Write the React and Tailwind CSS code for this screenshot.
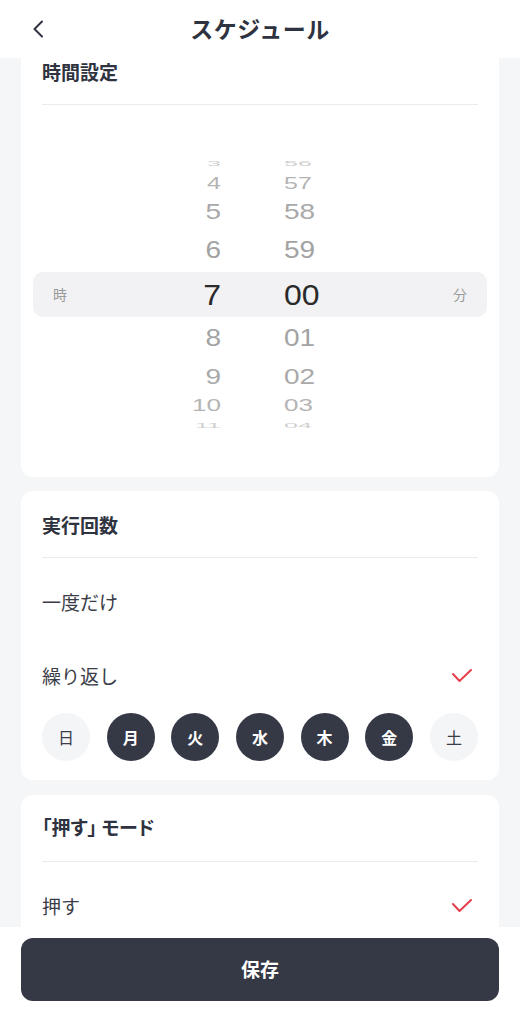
import React from "react";

const JP = { fontFamily: '"Noto Sans CJK JP", "Noto Sans", sans-serif' };
const NUM = { fontFamily: '"Liberation Sans", Arial, sans-serif' };

const rows = [
  { h: "3", m: "56", height: "h-[16px]", size: "text-[25px]", sy: 0.28, color: "text-[#cfcfcf]" },
  { h: "4", m: "57", height: "h-[24px]", size: "text-[25px]", sy: 0.67, color: "text-[#b4b4b4]" },
  { h: "5", m: "58", height: "h-[33px]", size: "text-[28px]", sy: 0.76, color: "text-[#a9a9a9]" },
  { h: "6", m: "59", height: "h-[44px]", size: "text-[28px]", sy: 0.86, color: "text-[#a3a3a3]" },
  { h: "7", m: "00", height: "h-[45px]", size: "text-[32px]", sy: 0.95, color: "text-[#2a2a2a]", active: true },
  { h: "8", m: "01", height: "h-[42px]", size: "text-[28px]", sy: 0.86, color: "text-[#a3a3a3]" },
  { h: "9", m: "02", height: "h-[36px]", size: "text-[28px]", sy: 0.76, color: "text-[#a9a9a9]" },
  { h: "10", m: "03", height: "h-[22px]", size: "text-[26px]", sy: 0.6, color: "text-[#b4b4b4]" },
  { h: "11", m: "04", height: "h-[16px]", size: "text-[25px]", sy: 0.28, color: "text-[#cfcfcf]" },
];

const days = [
  { d: "日", on: false },
  { d: "月", on: true },
  { d: "火", on: true },
  { d: "水", on: true },
  { d: "木", on: true },
  { d: "金", on: true },
  { d: "土", on: false },
];

function Check() {
  return (
    <svg width="20" height="14" viewBox="0 0 20 14" fill="none">
      <path d="M1 5 L7.5 12 L19 1" stroke="#e5404b" strokeWidth="2" strokeLinecap="round" strokeLinejoin="round" />
    </svg>
  );
}

function PickerRow({ row }) {
  return (
    <div
      className={`flex items-center px-[20px] ${row.height} ${
        row.active ? "bg-[#f2f2f4] rounded-[10px]" : "overflow-hidden"
      }`}
    >
      <div className="w-[168px] flex items-center justify-between">
        <span className={`text-[14px] text-[#9a9a9a] ${row.active ? "" : "invisible"}`} style={JP}>
          時
        </span>
        <span
          className={`${row.size} ${row.color} leading-none inline-block`}
          style={{ ...NUM, transform: `scaleY(${row.sy})` }}
        >
          {row.h}
        </span>
      </div>
      <div className="flex-1 ml-[63px] flex items-center justify-between">
        <span
          className={`${row.size} ${row.color} leading-none inline-block`}
          style={{ ...NUM, transform: `scaleY(${row.sy})` }}
        >
          {row.m}
        </span>
        <span className={`text-[14px] text-[#9a9a9a] ${row.active ? "" : "invisible"}`} style={JP}>
          分
        </span>
      </div>
    </div>
  );
}

function CardTitle({ children, pt = "pt-[22px]", mt = "mt-[20px]" }) {
  return (
    <>
      <div className={`${pt} px-[21px]`}>
        <h2 className="text-[19px] leading-[24px] font-bold text-[#2f3340] whitespace-pre [font-feature-settings:'palt']">
          {children}
        </h2>
      </div>
      <div className={`${mt} mx-[21px] h-px bg-[#ebebed]`} />
    </>
  );
}

export default function App() {
  return (
    <div className="w-full h-[1024px] flex flex-col bg-white text-[#3a3d48]" style={JP}>
      {/* header */}
      <div className="h-[58px] shrink-0 bg-white grid grid-cols-[1fr_auto_1fr] items-center">
        <button className="pl-[32px] flex items-center">
          <svg width="12" height="18" viewBox="0 0 12 18" fill="none">
            <path d="M10 1.5 L2.5 9 L10 16.5" stroke="#2f3340" strokeWidth="2" strokeLinecap="round" strokeLinejoin="round" />
          </svg>
        </button>
        <h1 className="text-[23px] font-bold text-[#2f3340] tracking-[0.5px] -mt-[1px]">スケジュール</h1>
        <div />
      </div>

      {/* content */}
      <div className="flex-1 overflow-hidden bg-[#f5f6f8] px-[21px]">
        <div className="-mt-[20px] flex flex-col">
          <div className="bg-white rounded-[12px] pb-[44px]">
            <CardTitle>時間設定</CardTitle>
            <div className="mt-[50px] mx-[12px] flex flex-col">
              {rows.map((r) => (
                <PickerRow key={r.h} row={r} />
              ))}
            </div>
          </div>

          <div className="mt-[14px] bg-white rounded-[12px] pb-[19px]">
            <CardTitle>実行回数</CardTitle>
            <div className="mt-[7px] px-[21px]">
              <div className="h-[74px] flex items-center text-[19px]">一度だけ</div>
              <div className="h-[74px] flex items-center justify-between text-[19px]">
                <span>繰り返し</span>
                <span className="pr-[6px]">
                  <Check />
                </span>
              </div>
              <div className="flex justify-between">
                {days.map((x) => (
                  <div
                    key={x.d}
                    className={`w-[48px] h-[48px] rounded-full flex items-center justify-center text-[16px] ${
                      x.on ? "bg-[#353845] text-white font-semibold" : "bg-[#f4f5f7] text-[#3a3d48]"
                    }`}
                  >
                    {x.d}
                  </div>
                ))}
              </div>
            </div>
          </div>

          <div className="mt-[15px] bg-white rounded-[12px] pb-[19px]">
            <CardTitle pt="pt-[20px]" mt="mt-[22px]">
              {"「押す」 モード"}
            </CardTitle>
            <div className="mt-[7px] px-[21px]">
              <div className="h-[74px] flex items-center justify-between text-[19px]">
                <span>押す</span>
                <span className="pr-[6px]">
                  <Check />
                </span>
              </div>
            </div>
          </div>
        </div>
      </div>

      {/* footer */}
      <div className="h-[97px] shrink-0 bg-white px-[21px] pt-[11px]">
        <button className="w-full h-[63px] rounded-[12px] bg-[#353845] text-white text-[19px] font-bold">
          保存
        </button>
      </div>
    </div>
  );
}
